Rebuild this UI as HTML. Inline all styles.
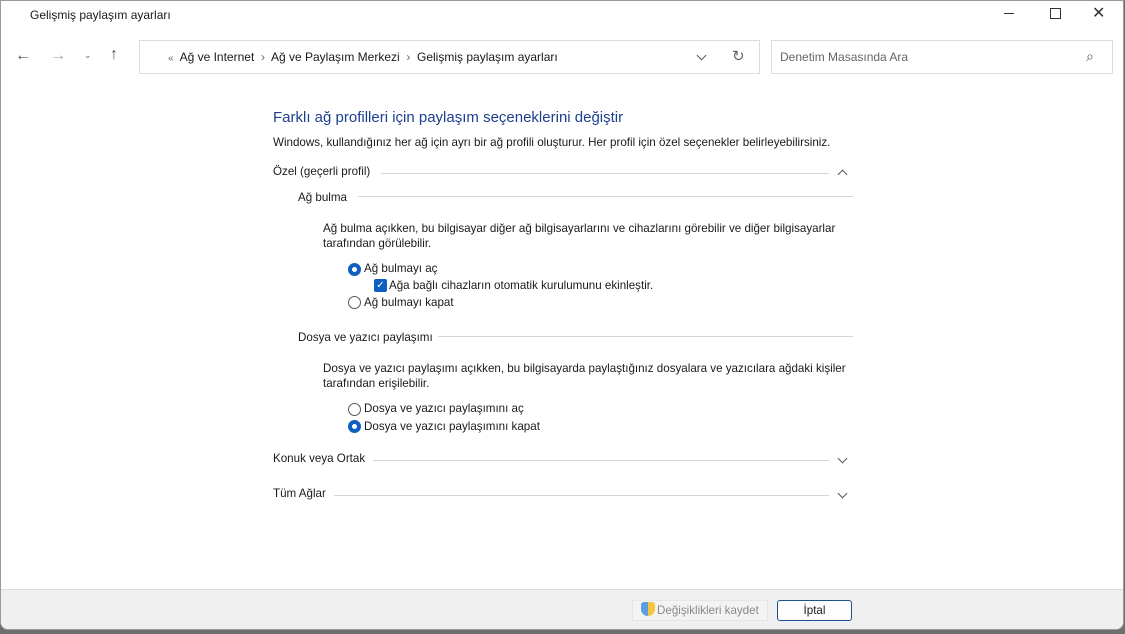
<!DOCTYPE html>
<html><head><meta charset="utf-8"><style>
*{margin:0;padding:0;box-sizing:border-box}
body{width:1125px;height:634px;background:#6f6f6f;font-family:"Liberation Sans",sans-serif;font-size:11.6px;color:#1a1a1a;position:relative;overflow:hidden}
.win{position:absolute;left:0;top:0;width:1124px;height:630px;background:#fff;border:1px solid #9a9a9a;border-radius:0 0 8px 8px;overflow:hidden}
.a{position:absolute;white-space:nowrap}
.line{position:absolute;height:1px;background:#d5d5d5}
.foot{position:absolute;left:0;top:588px;width:100%;height:43px;background:#f0f0f0;border-top:1px solid #dcdcdc}
.radio{position:absolute;width:13px;height:13px;border-radius:50%;border:1px solid #555;background:#fff}
.radio.on{border:4px solid #0f5fc0}
.chev{position:absolute;width:7px;height:7px;border-right:1.3px solid #555;border-bottom:1.3px solid #555}
</style></head><body>
<div class="win">
<div class="a" style="left:29px;top:7px;font-size:12px">Gelişmiş paylaşım ayarları</div>
<div class="a" style="left:1003px;top:12px;width:10px;height:1px;background:#333"></div>
<div class="a" style="left:1049px;top:7px;width:11px;height:11px;border:1.2px solid #333"></div>
<div class="a" style="left:1091px;top:2px;font-size:16px;color:#333">✕</div>
<div class="a" style="left:14px;top:46px;font-size:16px;color:#555">←</div>
<div class="a" style="left:49px;top:46px;font-size:16px;color:#aaa">→</div>
<div class="a" style="left:83px;top:49px;font-size:9px;color:#666">⌄</div>
<div class="a" style="left:109px;top:45px;font-size:16px;color:#555">↑</div>
<div class="a" style="left:138px;top:39px;width:621px;height:34px;border:1px solid #dcdcdc"></div>
<div class="a" style="left:167px;top:49px;font-size:12px"><span style="color:#666;font-size:10px">«</span>&nbsp; Ağ ve Internet &nbsp;<span style="color:#666">›</span>&nbsp; Ağ ve Paylaşım Merkezi &nbsp;<span style="color:#666">›</span>&nbsp; Gelişmiş paylaşım ayarları</div>
<div class="chev" style="left:697px;top:51px;transform:rotate(45deg)"></div>
<div class="a" style="left:731px;top:46px;font-size:15px;color:#666">↻</div>
<div class="a" style="left:770px;top:39px;width:342px;height:34px;border:1px solid #dcdcdc"></div>
<div class="a" style="left:779px;top:49px;font-size:12px;color:#666">Denetim Masasında Ara</div>
<div class="a" style="left:1085px;top:47px;font-size:14px;color:#555">⌕</div>

<div class="a" style="left:272px;top:108px;font-size:15px;color:#1e3f8f">Farklı ağ profilleri için paylaşım seçeneklerini değiştir</div>
<div class="a" style="left:272px;top:135px">Windows, kullandığınız her ağ için ayrı bir ağ profili oluşturur. Her profil için özel seçenekler belirleyebilirsiniz.</div>
<div class="a" style="left:272px;top:164px">Özel (geçerli profil)</div><div class="line" style="left:380px;top:172px;width:448px"></div>
<div class="chev" style="left:838px;top:170px;transform:rotate(225deg)"></div>
<div class="a" style="left:297px;top:190px">Ağ bulma</div><div class="line" style="left:357px;top:195px;width:495px"></div>
<div class="a" style="left:322px;top:220px;line-height:15px">Ağ bulma açıkken, bu bilgisayar diğer ağ bilgisayarlarını ve cihazlarını görebilir ve diğer bilgisayarlar<br>tarafından görülebilir.</div>
<div class="radio on" style="left:347px;top:262px"></div><div class="a" style="left:363px;top:261px">Ağ bulmayı aç</div>
<div class="a" style="left:373px;top:278px;width:13px;height:13px;background:#0f5fc0;border-radius:2px;color:#fff;font-size:10px;text-align:center;line-height:13px">✓</div>
<div class="a" style="left:388px;top:278px">Ağa bağlı cihazların otomatik kurulumunu ekinleştir.</div>
<div class="radio" style="left:347px;top:295px"></div><div class="a" style="left:363px;top:295px">Ağ bulmayı kapat</div>
<div class="a" style="left:297px;top:330px">Dosya ve yazıcı paylaşımı</div><div class="line" style="left:437px;top:335px;width:415px"></div>
<div class="a" style="left:322px;top:360px;line-height:15px">Dosya ve yazıcı paylaşımı açıkken, bu bilgisayarda paylaştığınız dosyalara ve yazıcılara ağdaki kişiler<br>tarafından erişilebilir.</div>
<div class="radio" style="left:347px;top:402px"></div><div class="a" style="left:363px;top:401px">Dosya ve yazıcı paylaşımını aç</div>
<div class="radio on" style="left:347px;top:419px"></div><div class="a" style="left:363px;top:419px">Dosya ve yazıcı paylaşımını kapat</div>
<div class="a" style="left:272px;top:451px">Konuk veya Ortak</div><div class="line" style="left:372px;top:459px;width:456px"></div>
<div class="chev" style="left:838px;top:454px;transform:rotate(45deg)"></div>
<div class="a" style="left:272px;top:486px">Tüm Ağlar</div><div class="line" style="left:333px;top:494px;width:495px"></div>
<div class="chev" style="left:838px;top:489px;transform:rotate(45deg)"></div>

<div class="foot"></div>
<div class="a" style="left:631px;top:599px;width:136px;height:21px;background:#f3f3f3;border:1px solid #e6e6e6"></div>
<div class="a" style="left:640px;top:601px;width:14px;height:14px;border-radius:3px 3px 7px 7px;background:linear-gradient(90deg,#5b9be0 50%,#f2c640 50%)"></div>
<div class="a" style="left:656px;top:603px;color:#888">Değişiklikleri kaydet</div>
<div class="a" style="left:776px;top:599px;width:75px;height:21px;background:#fdfdfd;border:1px solid #1f4f8f;border-radius:3px;text-align:center;line-height:19px">İptal</div>
</div>
</body></html>
